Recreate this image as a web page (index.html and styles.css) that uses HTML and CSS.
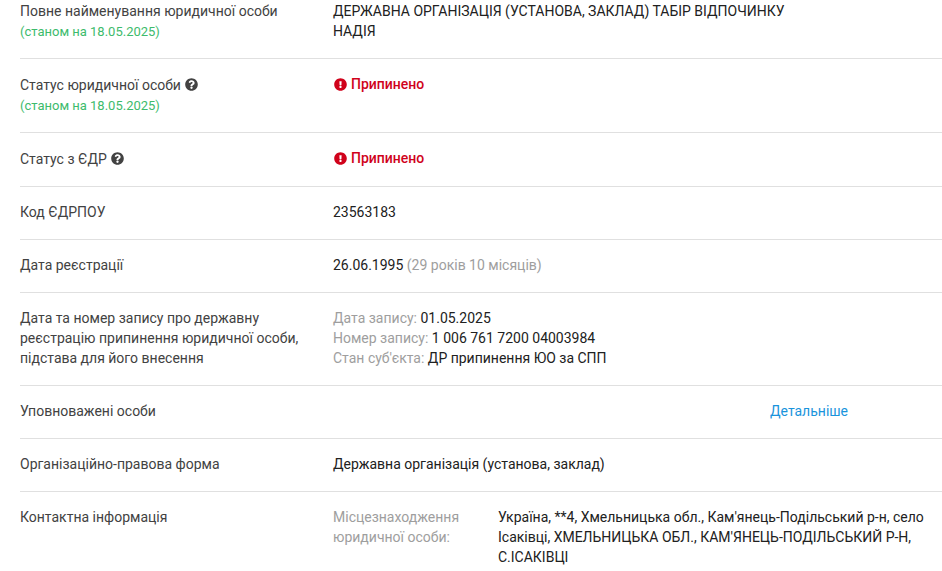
FILE: index.html
```
<!DOCTYPE html>
<html lang="uk">
<head>
<meta charset="utf-8">
<title>Реквізити</title>
<link rel="stylesheet" href="styles.css">
</head>
<body>
<svg class="defs" width="0" height="0" aria-hidden="true">
  <symbol id="q" viewBox="0 0 512 512"><path d="M504 256c0 137-111 248-248 248S8 393 8 256 119 8 256 8s248 111 248 248zM262.700 90c-54.500 0-89.300 23-116.600 63.800-3.500 5.300-2.400 12.400 2.700 16.300l34.700 26.300c5.200 3.900 12.600 3 16.700-2.100 17.900-22.700 30.100-35.800 57.300-35.800 20.400 0 45.700 13.100 45.700 33 0 15-12.400 22.700-32.600 34-23.600 13.200-54.800 29.700-54.800 70.900V302c0 6.600 5.400 12 12 12h56c6.600 0 12-5.400 12-12v-1.300c0-28.600 83.500-29.800 83.500-107.200C379.400 135.200 318.900 90 262.700 90zM256 339c-25.400 0-46 20.600-46 46s20.600 46 46 46 46-20.600 46-46-20.600-46-46-46z"/></symbol>
  <symbol id="ex" viewBox="0 0 512 512"><path d="M504 256c0 137-111 248-248 248S8 393 8 256 119 8 256 8s248 111 248 248zm-248 50c-25.400 0-46 20.600-46 46s20.600 46 46 46 46-20.600 46-46-20.600-46-46-46zm-43.700-165.400 7.400 136c.3 6.400 5.600 11.400 12 11.400h48.500c6.400 0 11.700-5 12-11.400l7.400-136c.3-6.900-5.100-12.600-12-12.600h-63.800c-6.900 0-12.300 5.700-12 12.600z"/></symbol>
</svg>
<main class="details">
  <div class="row row-first">
    <div class="label">Повне найменування юридичної особи<div class="as-of">(станом на 18.05.2025)</div></div>
    <div class="value value-title">ДЕРЖАВНА ОРГАНІЗАЦІЯ (УСТАНОВА, ЗАКЛАД) ТАБІР ВІДПОЧИНКУ НАДІЯ</div>
  </div>
  <div class="row row-icon">
    <div class="label">Статус юридичної особи <svg class="icon-q"><use href="#q"/></svg><div class="as-of">(станом на 18.05.2025)</div></div>
    <div class="value status"><svg class="icon-ex"><use href="#ex"/></svg>Припинено</div>
  </div>
  <div class="row row-icon">
    <div class="label">Статус з ЄДР <svg class="icon-q"><use href="#q"/></svg></div>
    <div class="value status"><svg class="icon-ex"><use href="#ex"/></svg>Припинено</div>
  </div>
  <div class="row">
    <div class="label">Код ЄДРПОУ</div>
    <div class="value">23563183</div>
  </div>
  <div class="row">
    <div class="label">Дата реєстрації</div>
    <div class="value">26.06.1995 <span class="muted">(29 років 10 місяців)</span></div>
  </div>
  <div class="row">
    <div class="label">Дата та номер запису про державну реєстрацію припинення юридичної особи, підстава для його внесення</div>
    <div class="value">
      <div><span class="muted">Дата запису:</span> 01.05.2025</div>
      <div><span class="muted">Номер запису:</span> 1 006 761 7200 04003984</div>
      <div><span class="muted">Стан суб'єкта:</span> ДР припинення ЮО за СПП</div>
    </div>
  </div>
  <div class="row">
    <div class="label">Уповноважені особи</div>
    <div class="spacer"></div>
    <a class="more" href="#">Детальніше</a>
  </div>
  <div class="row">
    <div class="label">Організаційно-правова форма</div>
    <div class="value">Державна організація (установа, заклад)</div>
  </div>
  <div class="row row-last">
    <div class="label">Контактна інформація</div>
    <div class="value contact">
      <div class="muted">Місцезнаходження юридичної особи:</div>
      <div>Україна, **4, Хмельницька обл., Кам'янець-Подільський р-н, село Ісаківці, ХМЕЛЬНИЦЬКА ОБЛ., КАМ'ЯНЕЦЬ-ПОДІЛЬСЬКИЙ Р-Н, С.ІСАКІВЦІ</div>
    </div>
  </div>
</main>
</body>
</html>
```
FILE: styles.css
```
html, body {
  margin: 0;
  padding: 0;
  height: 571px;
  overflow: hidden;
  background: #fff;
}
body {
  font-family: Roboto, "Noto Sans", sans-serif;
  font-size: 14px;
  line-height: 20px;
  color: #212121;
}
.defs { position: absolute; }
.details { padding-left: 20px; }
.row {
  display: grid;
  grid-template-columns: 313px 437px 1fr;
  padding: 15px 0 17px;
  border-bottom: 1px solid #e0e0e0;
}
.row-first { padding-top: 1px; padding-bottom: 17px; }
.row-icon { padding-top: 16px; padding-bottom: 17px; }
.row-last { border-bottom: 0; }
.label { color: #424242; padding-right: 12px; }
.as-of { color: #3dbb6c; font-size: 13px; margin-top: 1px; margin-bottom: -1px; }
.value { grid-column: 2 / 4; }
.value-title { max-width: 470px; }
.status { color: #d0021b; font-weight: 500; display: flex; align-items: center; height: 18px; }
.muted { color: #9e9e9e; }
.spacer { grid-column: 2; }
.more { grid-column: 3; color: #1a94dc; text-decoration: none; }
.contact {
  display: grid;
  grid-template-columns: 165px 1fr;
  padding-right: 16px;
}
.icon-q { width: 13px; height: 13px; fill: #424242; margin-left: 0.5px; vertical-align: -1px; }
.icon-ex { width: 13px; height: 13px; fill: #d0021b; margin-left: 0.5px; margin-right: 4.5px; }
```
